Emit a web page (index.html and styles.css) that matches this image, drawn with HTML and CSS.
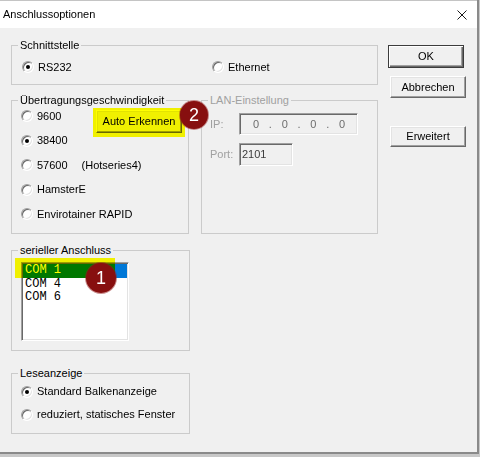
FILE: index.html
```html
<!DOCTYPE html>
<html lang="de">
<head>
<meta charset="utf-8">
<title>Anschlussoptionen</title>
<link rel="stylesheet" href="styles.css">
</head>
<body>
<div class="window">
  <div class="titlebar">
    <span class="title">Anschlussoptionen</span>
    <svg class="close" width="10" height="10" viewBox="0 0 10 10"><path d="M0.5 0.5L9.5 9.5M9.5 0.5L0.5 9.5" stroke="#1a1a1a" stroke-width="1" fill="none"/></svg>
  </div>
  <div class="client">
    <div class="main">
      <div class="group g-iface">
        <span class="caption">Schnittstelle</span>
        <div class="iface-row">
          <div class="opt wide"><span class="radio checked"></span>RS232</div>
          <div class="opt"><span class="radio"></span>Ethernet</div>
        </div>
      </div>

      <div class="pair">
        <div class="group g-speed">
          <span class="caption">Übertragungsgeschwindigkeit</span>
          <div class="speed-row">
            <div class="opt"><span class="radio"></span>9600</div>
            <div class="hl-wrap">
              <button class="btn auto">Auto Erkennen</button>
              <span class="highlight"></span>
            </div>
          </div>
          <div class="speed-row"><div class="opt"><span class="radio checked"></span>38400</div></div>
          <div class="speed-row"><div class="opt"><span class="radio"></span>57600<span class="hotseries">(Hotseries4)</span></div></div>
          <div class="speed-row"><div class="opt"><span class="radio"></span>HamsterE</div></div>
          <div class="speed-row"><div class="opt"><span class="radio"></span>Envirotainer RAPID</div></div>
          <span class="badge b2">2</span>
        </div>

        <div class="group g-lan">
          <span class="caption">LAN-Einstellung</span>
          <span class="lbl">IP:</span>
          <div class="field ip">
            <span class="oct">0</span><span class="dot">.</span><span class="oct">0</span><span class="dot">.</span><span class="oct">0</span><span class="dot">.</span><span class="oct">0</span>
          </div>
          <span class="lbl">Port:</span>
          <div class="field port">2101</div>
        </div>
      </div>

      <div class="group g-serial">
        <span class="caption">serieller Anschluss</span>
        <div class="listbox">
          <div class="item sel">COM 1</div>
          <div class="item">COM 4</div>
          <div class="item">COM 6</div>
        </div>
        <span class="highlight hl-list"></span>
        <span class="badge b1">1</span>
      </div>

      <div class="group g-read">
        <span class="caption">Leseanzeige</span>
        <div class="read-row"><div class="opt"><span class="radio checked"></span>Standard Balkenanzeige</div></div>
        <div class="read-row"><div class="opt"><span class="radio"></span>reduziert, statisches Fenster</div></div>
      </div>
    </div>

    <div class="side">
      <button class="btn ok">OK</button>
      <button class="btn cancel">Abbrechen</button>
      <button class="btn more">Erweitert</button>
    </div>
  </div>
</div>
</body>
</html>
```

FILE: styles.css
```css
html, body {
  margin: 0;
  padding: 0;
}

body {
  background: #c8c8c8;
  font: 11px/13px "Liberation Sans", Arial, sans-serif;
  color: #000;
}

.window {
  width: 477px;
  height: 452px;
  background: #f0f0f0;
  border-right: 2px solid #8a8a8a;
  border-bottom: 2px solid #8a8a8a;
  display: flex;
  flex-direction: column;
}

.titlebar {
  box-sizing: border-box;
  height: 28px;
  background: #fff;
  border-top: 1px solid #c4c4c4;
  display: flex;
  align-items: center;
  justify-content: space-between;
  padding: 0 10px 0 3px;
  flex: none;
}

.title {
  font-size: 11px;
}

.client {
  display: flex;
  padding: 17px 0 0 11px;
}

.main {
  width: 367px;
}

.side {
  margin-left: 10px;
  display: flex;
  flex-direction: column;
  align-items: flex-start;
}

/* group boxes */
.group {
  position: relative;
  box-sizing: border-box;
  border: 1px solid #cbcbcb;
}

.caption {
  position: absolute;
  top: -7px;
  left: 6px;
  padding: 0 2px;
  background: #f0f0f0;
  line-height: 13px;
  white-space: nowrap;
}

.g-iface {
  height: 40px;
  padding: 13px 0 0 10px;
}

.iface-row {
  display: flex;
}

.opt.wide {
  width: 190px;
}

.pair {
  display: flex;
  gap: 12px;
  margin-top: 15px;
}

.g-speed {
  width: 178px;
  height: 134px;
  padding: 3px 6px 0 9px;
}

.speed-row {
  height: 24.5px;
  display: flex;
  align-items: center;
}

.hotseries {
  margin-left: 10px;
}

.g-lan {
  width: 177px;
  height: 134px;
  padding: 12px 0 0 8px;
  display: grid;
  grid-template-columns: 29px auto;
  row-gap: 8px;
  align-content: start;
  align-items: center;
  justify-items: start;
}

.g-lan .caption,
.g-lan .lbl {
  color: #a0a0a0;
}

.g-serial {
  width: 179px;
  height: 101px;
  margin-top: 16px;
  padding: 11px 0 0 9px;
}

.g-read {
  width: 179px;
  height: 61px;
  margin-top: 22px;
  padding: 6px 0 0 9px;
}

.read-row {
  height: 23px;
  display: flex;
  align-items: center;
}

/* radio buttons */
.opt {
  display: flex;
  align-items: center;
  gap: 4px;
  height: 16px;
  white-space: nowrap;
}

.radio {
  position: relative;
  flex: none;
  box-sizing: border-box;
  width: 12px;
  height: 12px;
  border-radius: 50%;
  border: 1px solid;
  border-color: #a0a0a0 #ffffff #ffffff #a0a0a0;
  background: #fff;
  box-shadow: inset 1px 1px 0 #696969, inset -1px -1px 0 #e3e3e3;
}

.radio.checked::after {
  content: "";
  position: absolute;
  left: 3px;
  top: 3px;
  width: 4px;
  height: 4px;
  border-radius: 50%;
  background: #000;
}

/* push buttons */
.btn {
  box-sizing: border-box;
  height: 22px;
  width: 76px;
  padding: 0;
  margin: 0;
  background: #f0f0f0;
  border: 1px solid;
  border-color: #ffffff #696969 #696969 #ffffff;
  box-shadow: inset -1px -1px 0 #a0a0a0, inset 1px 1px 0 #e3e3e3;
  font: 11px/13px "Liberation Sans", Arial, sans-serif;
  color: #000;
}

.btn.ok {
  height: 23px;
  border-color: #3c3c3c;
  box-shadow: inset 1px 1px 0 #fff, inset -1px -1px 0 #696969, inset -2px -2px 0 #a0a0a0;
}

.btn.cancel {
  margin: 8px 0 0 2px;
}

.btn.more {
  margin: 28px 0 0 2px;
  height: 21px;
}

.hl-wrap {
  position: relative;
  margin-left: auto;
  align-self: flex-start;
  margin-top: 6px;
}

.btn.auto {
  display: block;
  width: 86px;
  height: 23px;
}

/* highlighter marks */
.highlight {
  position: absolute;
  background: #ffff00;
  mix-blend-mode: multiply;
  pointer-events: none;
}

.hl-wrap .highlight {
  inset: -2px -3px -4px -3px;
}

.hl-list {
  left: 3px;
  top: 7px;
  width: 100px;
  height: 20px;
}

/* numbered badges */
.badge {
  position: absolute;
  z-index: 2;
  border-radius: 50%;
  background: #870f0f;
  box-shadow: 0 0 0 1px rgba(150, 30, 30, 0.5);
  color: #fff;
  font: 18px/1 "Liberation Sans", Arial, sans-serif;
  display: flex;
  align-items: center;
  justify-content: center;
}

.b2 {
  left: 168px;
  top: 0;
  width: 28px;
  height: 28px;
}

.b1 {
  left: 74px;
  top: 12px;
  width: 30px;
  height: 30px;
}

/* LAN fields */
.field {
  box-sizing: border-box;
  border: 1px solid;
  border-color: #a0a0a0 #ffffff #ffffff #a0a0a0;
  box-shadow: inset 1px 1px 0 #696969, inset -1px -1px 0 #e3e3e3;
  background: #f0f0f0;
  display: flex;
  align-items: center;
}

.ip {
  width: 119px;
  height: 22px;
  padding-left: 9px;
  color: #6d6d6d;
}

.oct {
  width: 14px;
  text-align: center;
}

.dot {
  width: 14.7px;
  text-align: center;
}

.port {
  width: 54px;
  height: 23px;
  padding-left: 2px;
  color: #3c3c3c;
}

/* list box */
.listbox {
  box-sizing: border-box;
  width: 108px;
  height: 79px;
  border: 1px solid;
  border-color: #a0a0a0 #ffffff #ffffff #a0a0a0;
  box-shadow: inset 1px 1px 0 #696969, inset -1px -1px 0 #e3e3e3;
  background: #fff;
  padding: 1px;
  font: 12px/13.5px "Liberation Mono", "Courier New", monospace;
}

.item {
  padding-left: 2px;
  white-space: pre;
}

.item.sel {
  background: #0078d7;
  color: #fff;
}
```
